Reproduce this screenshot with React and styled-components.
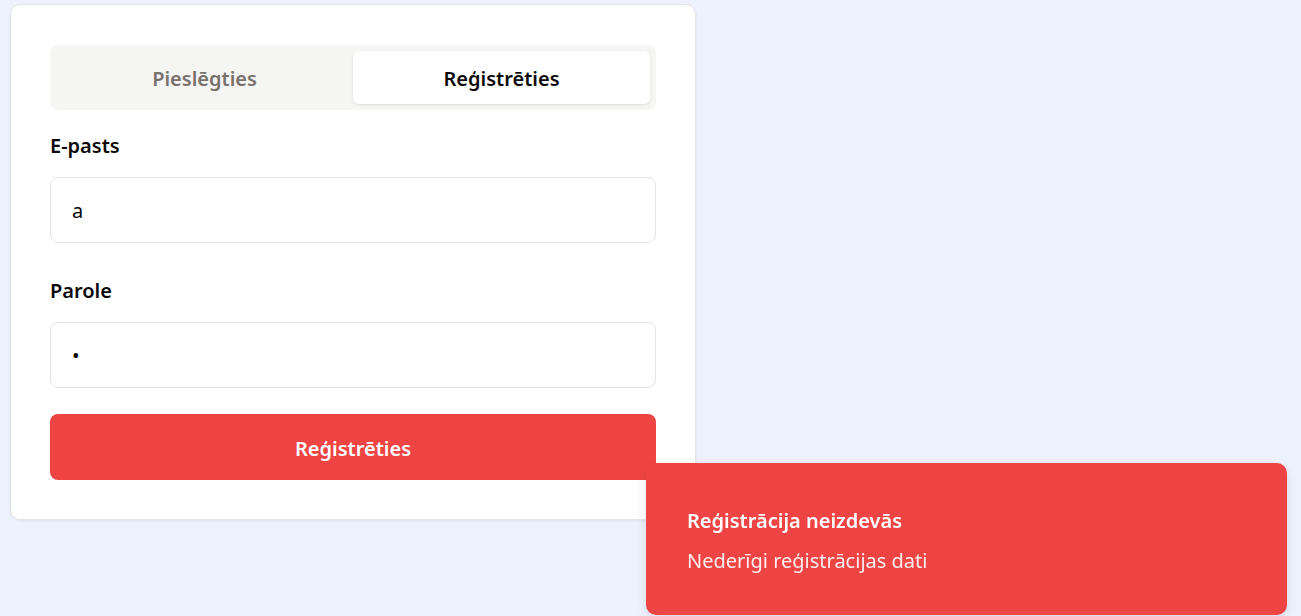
import React from "react";
import styled, { createGlobalStyle } from "styled-components";

const Global = createGlobalStyle`
  html, body { margin: 0; padding: 0; background: #eef2ff; }
  body { font-family: "Noto Sans", "Open Sans", sans-serif; color: #0c0a09; }
  * { box-sizing: border-box; }
`;

const Page = styled.div`
  min-height: 616px;
  padding: 4px 0 0 10px;
`;

const Card = styled.div`
  width: 686px;
  background: #ffffff;
  border: 1px solid #e7e5e4;
  border-radius: 10px;
  box-shadow: 0 1px 3px rgba(0, 0, 0, 0.08);
  padding: 40px 39px 39px 39px;
  display: flex;
  flex-direction: column;
`;

const Tabs = styled.div`
  display: grid;
  grid-template-columns: 1fr 1fr;
  background: #f5f5f4;
  border-radius: 8px;
  padding: 6px;
  margin-bottom: 22px;
`;

const Tab = styled.button`
  height: 53px;
  border: none;
  border-radius: 6px;
  padding: 2px 0 0;
  font-family: inherit;
  font-size: 20px;
  font-weight: 600;
  background: ${(p) => (p.$active ? "#ffffff" : "transparent")};
  color: ${(p) => (p.$active ? "#0c0a09" : "#78716c")};
  box-shadow: ${(p) => (p.$active ? "0 1px 3px rgba(0,0,0,0.1)" : "none")};
`;

const Field = styled.div`
  display: flex;
  flex-direction: column;
  gap: 17px;
  margin-bottom: ${(p) => p.$mb || 0}px;
`;

const Label = styled.label`
  font-size: 20px;
  font-weight: 600;
  line-height: 28px;
`;

const Input = styled.div`
  height: 66px;
  border: 1px solid #e7e5e4;
  border-radius: 8px;
  padding: 0 21px;
  display: flex;
  align-items: center;
  font-size: 20px;
  color: #0c0a09;
`;

const Submit = styled.button`
  height: 66px;
  border: none;
  border-radius: 8px;
  padding: 3px 0 0;
  background: #ef4444;
  color: #ffffff;
  font-family: inherit;
  font-size: 20px;
  font-weight: 600;
`;

const Toast = styled.div`
  position: fixed;
  right: 14px;
  bottom: 1px;
  width: 641px;
  background: #ef4444;
  border-radius: 10px;
  padding: 44px 41px 40px;
  color: #ffffff;
  box-shadow: 0 4px 12px rgba(0, 0, 0, 0.1);
`;

const ToastTitle = styled.div`
  font-size: 20px;
  font-weight: 600;
  line-height: 28px;
`;

const ToastDesc = styled.div`
  font-size: 20px;
  line-height: 28px;
  margin-top: 12px;
  opacity: 0.9;
`;

export default function App() {
  return (
    <Page>
      <Global />
      <Card>
        <Tabs>
          <Tab>Pieslēgties</Tab>
          <Tab $active>Reģistrēties</Tab>
        </Tabs>
        <Field $mb={34}>
          <Label>E-pasts</Label>
          <Input>a</Input>
        </Field>
        <Field $mb={26}>
          <Label>Parole</Label>
          <Input>•</Input>
        </Field>
        <Submit>Reģistrēties</Submit>
      </Card>
      <Toast>
        <ToastTitle>Reģistrācija neizdevās</ToastTitle>
        <ToastDesc>Nederīgi reģistrācijas dati</ToastDesc>
      </Toast>
    </Page>
  );
}
